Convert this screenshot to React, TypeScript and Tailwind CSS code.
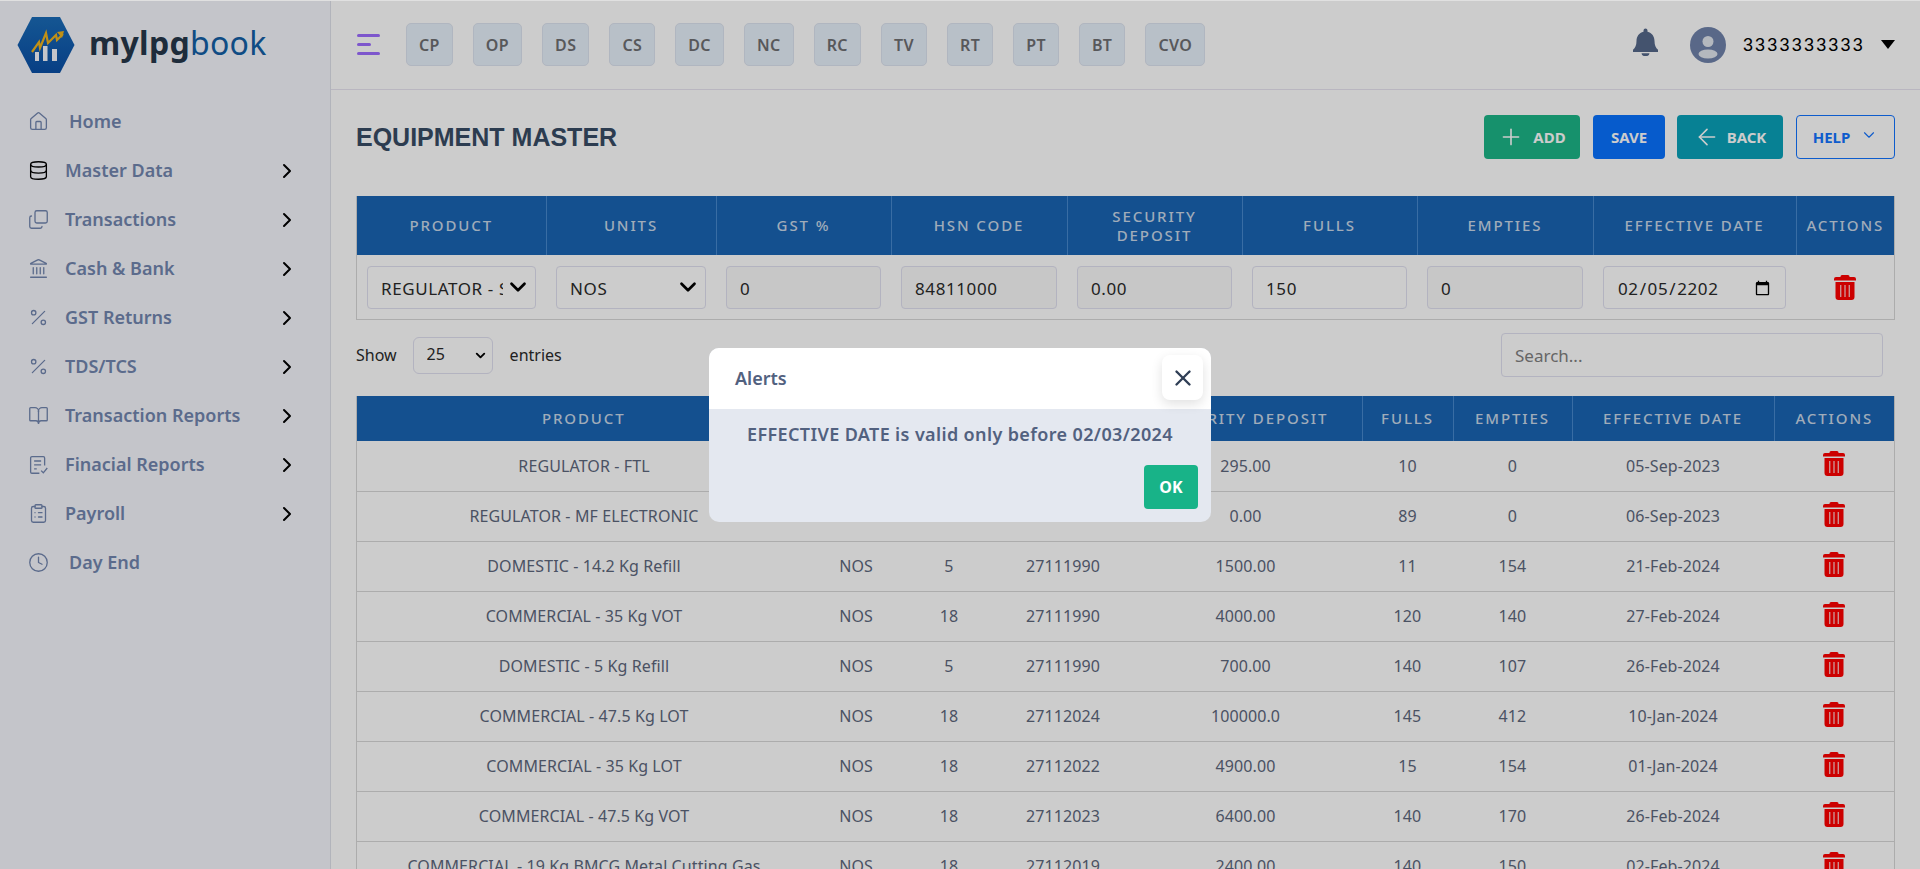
import { ArrowLeft, BookOpen, ChevronDown, ChevronRight, Clock, ClipboardList, Copy, Database, Landmark, Percent, Plus, X, House } from 'lucide-react'
import type { ReactNode } from 'react'

const ReportIcon = ({ size, strokeWidth, className }: { size: number; strokeWidth: number; className: string }) => (
  <svg width={size} height={size} viewBox="0 0 24 24" fill="none" stroke="currentColor" strokeWidth={strokeWidth} className={className}>
    <path d="M19 13V4.500A1.500 1.500 0 0 0 17.500 3h-13A1.500 1.500 0 0 0 3 4.500v16A1.500 1.500 0 0 0 4.500 22H13" />
    <path d="M7 8h8M7 12.500h8M7 17h3" />
    <path d="m15 19 2.500 2.500L22 16" />
  </svg>
)

const FlippedCopy = ({ size, strokeWidth, className }: { size: number; strokeWidth: number; className: string }) => (
  <Copy size={size} strokeWidth={strokeWidth} className={`-scale-y-100 ${className}`} />
)

const navItems = [
  { label: 'Home', icon: House, sub: false },
  { label: 'Master Data', icon: Database, sub: true, dark: true },
  { label: 'Transactions', icon: FlippedCopy, sub: true },
  { label: 'Cash & Bank', icon: Landmark, sub: true },
  { label: 'GST Returns', icon: Percent, sub: true },
  { label: 'TDS/TCS', icon: Percent, sub: true },
  { label: 'Transaction Reports', icon: BookOpen, sub: true },
  { label: 'Finacial Reports', icon: ReportIcon, sub: true },
  { label: 'Payroll', icon: ClipboardList, sub: true },
  { label: 'Day End', icon: Clock, sub: false },
]

const shortcuts = ['CP', 'OP', 'DS', 'CS', 'DC', 'NC', 'RC', 'TV', 'RT', 'PT', 'BT', 'CVO']

const rows = [
  ['REGULATOR - FTL', 'NOS', '18', '84811000', '295.00', '10', '0', '05-Sep-2023'],
  ['REGULATOR - MF ELECTRONIC', 'NOS', '18', '84811000', '0.00', '89', '0', '06-Sep-2023'],
  ['DOMESTIC - 14.2 Kg Refill', 'NOS', '5', '27111990', '1500.00', '11', '154', '21-Feb-2024'],
  ['COMMERCIAL - 35 Kg VOT', 'NOS', '18', '27111990', '4000.00', '120', '140', '27-Feb-2024'],
  ['DOMESTIC - 5 Kg Refill', 'NOS', '5', '27111990', '700.00', '140', '107', '26-Feb-2024'],
  ['COMMERCIAL - 47.5 Kg LOT', 'NOS', '18', '27112024', '100000.0', '145', '412', '10-Jan-2024'],
  ['COMMERCIAL - 35 Kg LOT', 'NOS', '18', '27112022', '4900.00', '15', '154', '01-Jan-2024'],
  ['COMMERCIAL - 47.5 Kg VOT', 'NOS', '18', '27112023', '6400.00', '140', '170', '26-Feb-2024'],
  ['COMMERCIAL - 19 Kg BMCG Metal Cutting Gas', 'NOS', '18', '27112019', '2400.00', '140', '150', '02-Feb-2024'],
]

const TrashIcon = ({ className = '' }: { className?: string }) => (
  <svg width="22" height="25" viewBox="0 0 22 25" className={`inline-block ${className}`}>
    <path fill="#ff0000" d="M8 0h6a1.5 1.5 0 0 1 1.5 1.5V2H20a2 2 0 0 1 2 2v1.5H0V4a2 2 0 0 1 2-2h4.5v-.5A1.500 1.500 0 0 1 8 0z" />
    <path fill="#ff0000" d="M1.500 7h19v15a3 3 0 0 1-3 3h-13a3 3 0 0 1-3-3z" />
    <rect x="6" y="10" width="1.4" height="12" fill="#ffffff" opacity="0.7" />
    <rect x="10.300" y="10" width="1.4" height="12" fill="#ffffff" opacity="0.7" />
    <rect x="14.600" y="10" width="1.4" height="12" fill="#ffffff" opacity="0.7" />
  </svg>
)

const Logo = () => (
  <div className="flex items-center">
    <svg width="58" height="58" viewBox="0 0 58 58">
      <defs>
        <linearGradient id="hex" x1="0" y1="0" x2="0" y2="1">
          <stop offset="0" stopColor="#1a6cb8" />
          <stop offset="1" stopColor="#0a4fa6" />
        </linearGradient>
      </defs>
      <path d="M15 1h28l14.500 28L43 57H15L.5 29z" fill="url(#hex)" />
      <rect x="18" y="36" width="4" height="9" fill="#f6f7fd" />
      <rect x="26" y="30" width="4.500" height="15" fill="#f6f7fd" />
      <rect x="35" y="33" width="5" height="12" fill="#f6f7fd" />
      <path d="M15 36 22 26l1 6 6-15 2 10 8-8 1 5 6-6" fill="none" stroke="#f0b41c" strokeWidth="2.200" />
      <path d="M40 16l7-1-2 7z" fill="#f0b41c" />
    </svg>
    <div className="-mt-[4px] ml-[14px] text-[32px] leading-none tracking-[0.3px]">
      <span className="font-bold text-[#26384a]">mylpg</span>
      <span className="font-normal text-[#135fa6]">book</span>
    </div>
  </div>
)

const Sidebar = () => (
  <aside className="w-[331px] shrink-0 border-r border-[#dfe1ea] bg-[#f6f7fd]">
    <div className="pl-[17px] pt-[16px]">
      <Logo />
    </div>
    <nav className="mt-[23px]">
      {navItems.map(({ label, icon: Icon, sub, dark }) => (
        <div key={label} className="flex h-[49px] items-center pl-[28px] pr-[31px]">
          <Icon
            size={21}
            strokeWidth={1.5}
            className={dark ? 'text-black' : 'text-[#7286af]'}
          />
          <span className={`text-[18px] font-semibold text-[#7286af] ${sub ? 'ml-[16px]' : 'ml-[20px]'}`}>{label}</span>
          {sub && <ChevronRight size={24} strokeWidth={2} className="ml-auto text-black" />}
        </div>
      ))}
    </nav>
  </aside>
)

const Header = () => (
  <header className="flex h-[90px] items-center border-b border-[#e8e4f0] pl-[26px] pr-[25px]">
    <div className="flex w-[23px] flex-col gap-[6px]">
      <span className="h-[3px] w-[23px] rounded bg-[#9d6cff]" />
      <span className="h-[3px] w-[14px] rounded bg-[#9d6cff]" />
      <span className="h-[3px] w-[23px] rounded bg-[#9d6cff]" />
    </div>
    <div className="ml-[26px] flex gap-[20px]">
      {shortcuts.map((s) => (
        <span
          key={s}
          className="flex h-[43px] items-center rounded-[5px] border border-[#dde4f0] bg-[#e7f0fb] px-[12px] text-[16px] font-semibold tracking-[0.4px] text-[#6e6f72]"
        >
          {s}
        </span>
      ))}
    </div>
    <div className="ml-auto flex items-center">
      <svg width="25" height="28" viewBox="0 0 25 28" className="-mt-[6px]">
        <path fill="#55688a" d="M10.500 2.500a2 2 0 0 1 4 0v1.200c4.500 1 7 4.800 7 9.300 0 4.500 1.300 6.800 3.500 8.800V24H0v-2.200c2.200-2 3.500-4.300 3.500-8.800 0-4.500 2.500-8.300 7-9.300z" />
        <path fill="#55688a" d="M8.500 25.200h8a4 3 0 0 1-8 0z" />
      </svg>
      <svg width="36" height="36" viewBox="0 0 36 36" className="ml-[32px]">
        <circle cx="18" cy="18" r="18" fill="#7083ab" />
        <circle cx="18" cy="14.500" r="5.500" fill="#fff" opacity="0.8" />
        <ellipse cx="18" cy="27" rx="9.500" ry="4.500" fill="#fff" opacity="0.8" />
      </svg>
      <span className="ml-[17px] mt-[2px] font-['Liberation_Sans',sans-serif] text-[18px] tracking-[2.200px] text-black">3333333333</span>
      <span className="ml-[16px] h-0 w-0 border-x-[7.5px] border-t-[9px] border-x-transparent border-t-black" />
    </div>
  </header>
)

const ActionButton = ({ className, children }: { className: string; children: ReactNode }) => (
  <button className={`flex h-[44px] items-center justify-center rounded-[4px] text-[15px] font-bold ${className}`}>
    {children}
  </button>
)

const SelectBox = ({ className, value, right }: { className: string; value: string; right: string }) => (
  <div className={`relative ${className}`}>
    <select
      defaultValue={value}
      className={`h-full w-full appearance-none rounded-[4px] border border-[#e0e0f0] pl-[13px] pt-[3px] text-[17px] tracking-[0.6px] text-[#2a2a2a] outline-none ${right}`}
    >
      <option>{value}</option>
    </select>
    <ChevronDown size={26} strokeWidth={2.500} className="pointer-events-none absolute right-[5px] top-[8px] text-black" />
  </div>
)

const formInput = 'h-[43px] w-full rounded-[4px] border border-[#e0e0f0] pl-[13px] pt-[3px] text-[17px] tracking-[0.6px] text-[#2a2a2a] outline-none'
const formHeads = ['PRODUCT', 'UNITS', 'GST %', 'HSN CODE', 'SECURITY DEPOSIT', 'FULLS', 'EMPTIES', 'EFFECTIVE DATE', 'ACTIONS']
const headCell = 'border-l border-[#4889ce] text-center align-middle text-[15px] font-medium leading-[19px] tracking-[1.900px] text-[#c8d8e8] first:border-l-0'

const FormTable = () => (
  <div className="border-x border-b border-[#d8d8d8]">
    <table className="w-full table-fixed">
      <colgroup>
        <col className="w-[189px]" />
        <col className="w-[170px]" />
        <col className="w-[175px]" />
        <col className="w-[176px]" />
        <col className="w-[175px]" />
        <col className="w-[175px]" />
        <col className="w-[176px]" />
        <col className="w-[203px]" />
        <col />
      </colgroup>
      <thead>
        <tr className="h-[59px] bg-[#1a64b3]">
          {formHeads.map((h) => (
            <th key={h} className={`${headCell} ${h === 'SECURITY DEPOSIT' ? 'px-[30px]' : ''}`}>{h}</th>
          ))}
        </tr>
      </thead>
      <tbody>
        <tr className="h-[64px]">
          <td className="px-[10px]">
            <SelectBox className="h-[43px]" value="REGULATOR - SURAKSHA HOSE" right="pr-[32px]" />
          </td>
          <td className="px-[10px]">
            <SelectBox className="h-[43px]" value="NOS" right="pr-[32px]" />
          </td>
          <td className="px-[10px]"><input readOnly value="0" className={`${formInput} bg-[#f9f9f9]`} /></td>
          <td className="px-[10px]"><input readOnly value="84811000" className={`${formInput} bg-[#f9f9f9]`} /></td>
          <td className="px-[10px]"><input readOnly value="0.00" className={`${formInput} bg-[#f9f9f9]`} /></td>
          <td className="px-[10px]"><input readOnly value="150" className={formInput} /></td>
          <td className="px-[10px]"><input readOnly value="0" className={`${formInput} bg-[#f9f9f9]`} /></td>
          <td className="px-[10px]"><input type="date" defaultValue="2202-02-05" className={`${formInput} pr-[12px]`} /></td>
          <td className="text-center"><TrashIcon /></td>
        </tr>
      </tbody>
    </table>
  </div>
)

const listHeads = ['PRODUCT', 'UNITS', 'GST %', 'HSN CODE', 'SECURITY DEPOSIT', 'FULLS', 'EMPTIES', 'EFFECTIVE DATE', 'ACTIONS']

const ListTable = () => (
  <div className="border-x border-[#d8d8d8]">
    <table className="w-full table-fixed">
      <colgroup>
        <col className="w-[454px]" />
        <col className="w-[90px]" />
        <col className="w-[96px]" />
        <col className="w-[132px]" />
        <col className="w-[233px]" />
        <col className="w-[91px]" />
        <col className="w-[119px]" />
        <col className="w-[202px]" />
        <col />
      </colgroup>
      <thead>
        <tr className="h-[45px] bg-[#1a64b3]">
          {listHeads.map((h) => (
            <th key={h} className={headCell}>{h}</th>
          ))}
        </tr>
      </thead>
      <tbody>
        {rows.map((row) => (
          <tr key={row[0]} className="h-[50px] border-b border-[#d8d8d8] text-center text-[16px] tracking-[0.1px] text-[#5d677c]">
            {row.map((c, i) => (
              <td key={i}>{c}</td>
            ))}
            <td><TrashIcon className="mb-[4px]" /></td>
          </tr>
        ))}
      </tbody>
    </table>
  </div>
)

const AlertModal = () => (
  <div className="fixed inset-0 flex justify-center border-t border-[#e0e0e0] bg-black/20 pt-[347px]">
    <div className="h-[174px] w-[502px] overflow-hidden rounded-[10px] bg-[#e4e8f0]">
      <div className="flex h-[61px] items-start justify-between bg-white pl-[26px] pr-[8px] pt-[7px]">
        <span className="mt-[10px] text-[18px] font-semibold text-[#52617f]">Alerts</span>
        <button className="flex h-[45px] w-[41px] items-center justify-center rounded-[8px] bg-white shadow-[0_4px_12px_rgba(0,0,0,0.12)]">
          <X size={26} strokeWidth={2.200} className="text-[#2f3e55]" />
        </button>
      </div>
      <p className="mt-[12px] text-center text-[18px] font-semibold tracking-[0.37px] text-[#52617f]">
        EFFECTIVE DATE is valid only before 02/03/2024
      </p>
      <div className="mt-[17px] flex justify-end pr-[13px]">
        <button className="h-[44px] w-[54px] rounded-[4px] bg-[#18b388] text-[16px] font-bold text-white">OK</button>
      </div>
    </div>
  </div>
)

export default function App() {
  return (
    <div className="flex h-screen overflow-hidden bg-white font-['Noto_Sans',sans-serif]">
      <Sidebar />
      <main className="min-w-0 flex-1">
        <Header />
        <div className="px-[25px]">
          <div className="flex h-[106px] items-start justify-between pt-[25px]">
            <h1 className="mt-[4px] font-['Liberation_Sans',sans-serif] text-[25px] font-bold text-[#384c64]">EQUIPMENT MASTER</h1>
            <div className="flex gap-[13px]">
              <ActionButton className="w-[96px] gap-[9px] bg-[#1cb688] text-white">
                <Plus size={26} strokeWidth={1.500} />
                ADD
              </ActionButton>
              <ActionButton className="w-[72px] bg-[#0872ff] text-white">SAVE</ActionButton>
              <ActionButton className="-ml-px w-[106px] gap-[7px] bg-[#09a2ba] text-white">
                <ArrowLeft size={26} strokeWidth={1.500} />
                BACK
              </ActionButton>
              <ActionButton className="w-[99px] gap-[10px] border border-[#1273ff] text-[#1273ff]">
                HELP
                <ChevronDown size={18} strokeWidth={1.500} className="-mt-1" />
              </ActionButton>
            </div>
          </div>
          <FormTable />
          <div className="flex h-[76px] items-center justify-between pb-[6px] pr-[12px] text-[16px] text-[#2a2a2a]">
            <div className="flex items-center">
              <span>Show</span>
              <div className="relative ml-[16px] h-[37px] w-[80px]">
                <select defaultValue="25" className="h-full w-full appearance-none rounded-[6px] border border-[#e0e0f0] pb-[3px] pl-[13px] text-[16px] outline-none">
                  <option>25</option>
                </select>
                <ChevronDown size={15} strokeWidth={3} className="pointer-events-none absolute right-[5px] top-[11px] text-black" />
              </div>
              <span className="ml-[17px]">entries</span>
            </div>
            <input placeholder="Search..." className="h-[44px] w-[382px] rounded-[4px] border border-[#e0e0f0] pl-[13px] text-[17px] outline-none placeholder:text-[#808080]" />
          </div>
          <ListTable />
        </div>
      </main>
      <AlertModal />
    </div>
  )
}
